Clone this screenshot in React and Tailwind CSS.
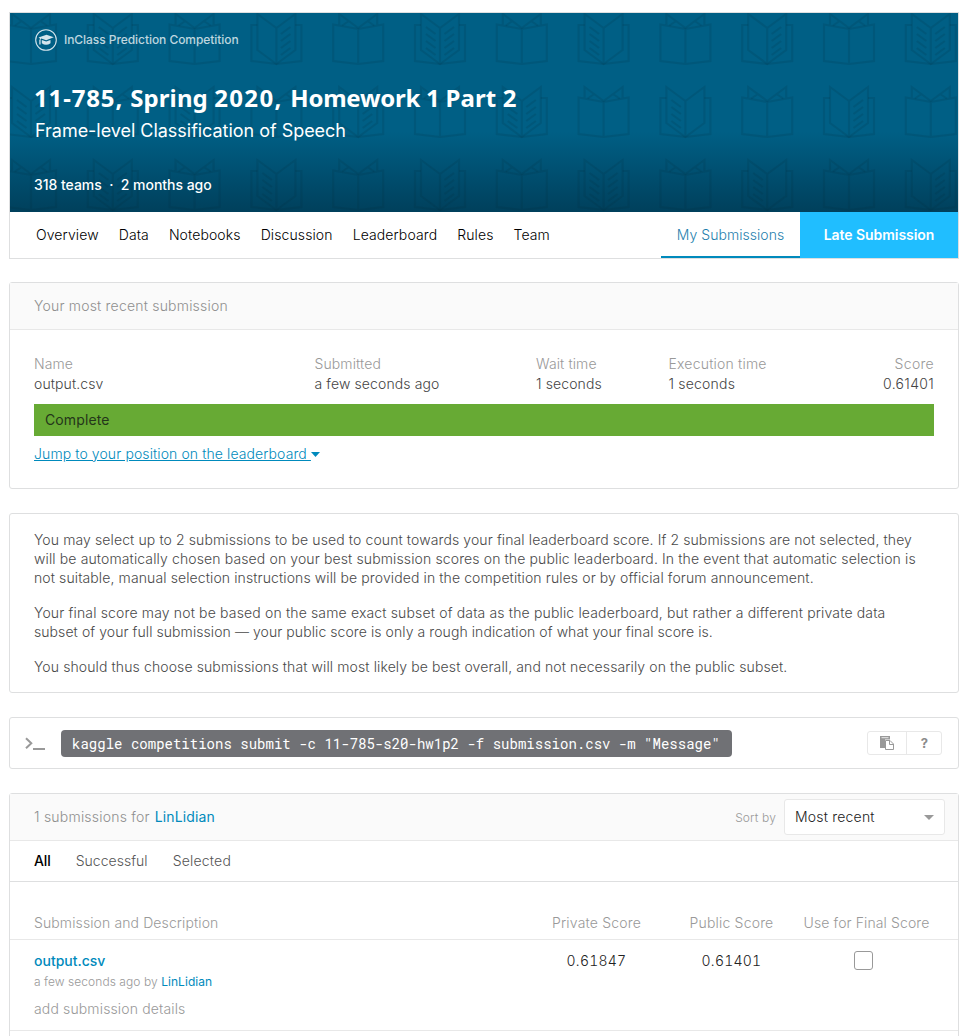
const books = [
  ["plain","both","plain","right","plain","both","plain","left","plain","right","plain","both"],
  ["both","plain","left","plain","right","plain","both","plain","left","plain","right","plain"],
  ["plain","both","plain","left","plain","right","plain","both","plain","left","plain","right"],
];

function Book({ kind, x, y }) {
  const lines = (s) => [14, 21, 28, 35].map((v) => <path key={v} d={s < 0 ? `M-4.5 ${v + 7}L-14 ${v}` : `M4.5 ${v + 7}L14 ${v}`} />);
  return (
    <g transform={`translate(${x} ${y})`}>
      {kind === "plain" ? (
        <>
          <path d="M-25 11.5L0 16L25 11.5V48L0 51L-25 48ZM0 16V51" />
          <path d="M-19 11.5V1L0 15L19 1V11.5M-16 12.5L-10 8.5M16 12.5L10 8.5" />
        </>
      ) : (
        <>
          <path d="M0 15L-19 1V37L0 51L19 37V1ZM0 15V51" />
          <path d="M-19 12H-25V48L0 51L25 48V12H19" />
          {kind !== "right" && lines(-1)}
          {kind !== "left" && lines(1)}
        </>
      )}
    </g>
  );
}

function Hero() {
  return (
    <div className="relative h-[199px] overflow-hidden bg-[#005f85]">
      <div className="absolute inset-x-0 bottom-0 h-[80px] bg-gradient-to-b from-transparent to-[#00405c]" />
      <svg className="absolute inset-0" width="948" height="199" fill="none" stroke="#00283c" strokeOpacity=".14" strokeWidth="2.1">
        {books.map((row, r) => row.map((kind, c) => <Book key={`${r}-${c}`} kind={kind} x={21 + c * 81.8} y={r * 73} />))}
      </svg>
      <div className="relative px-[25px] pt-[15px] text-white">
        <div className="flex h-[23px] items-center gap-[7px] text-[12px] font-medium tracking-[-0.06px] text-white/75">
          <svg width="22" height="22" viewBox="0 0 22 22">
            <circle cx="11" cy="11" r="10.3" fill="none" stroke="#d5e5ec" strokeWidth="1.1" />
            <path fill="#d5e5ec" d="M3.5 8.6L11.5 5.8L18.8 8.3L11.2 11.2L6.3 9.5L5.6 10.2V15.5H4.3V10.8H4.8V9.2ZM6.8 10.9L11.2 12.5L15.5 10.9V14.2Q11 17.2 6.8 14.2Z" />
          </svg>
          <span className="whitespace-nowrap">InClass Prediction Competition</span>
        </div>
        <h1 className="-ml-px mt-[30px] h-[34px] whitespace-nowrap font-['Noto_Sans'] text-[24px] leading-[34px] font-bold">
          <span className="tracking-[0.85px]">11-785, </span>
          <span className="tracking-[0.1px]">Spring </span>
          <span className="tracking-[1.35px]">2020, </span>
          <span className="tracking-[-0.25px]">Homework 1 </span>
          <span className="tracking-[0.1px]">Part 2</span>
        </h1>
        <h2 className="mt-[4px] text-[18px] leading-[24px] font-normal tracking-[-0.03px]">Frame-level Classification of Speech</h2>
        <p className="-ml-px mt-[32px] text-[14px] leading-5 font-medium tracking-[-0.03px]">318 teams&nbsp; · &nbsp;2 months ago</p>
      </div>
    </div>
  );
}

function Field({ label, value, className }) {
  return (
    <div className={className}>
      <div className="text-[#999]">{label}</div>
      <div className="text-[#444]">{value}</div>
    </div>
  );
}

const card = "rounded-[3px] border border-[#dedfe0] bg-white";

export default function App() {
  return (
    <div className="h-[1036px] overflow-hidden bg-white pt-3 pl-[9px] font-['Inter',sans-serif] text-[14px] font-light tracking-[0.11px]">
      <div className="w-[950px]">
        <header className="h-[247px] border border-[#dedfe0]">
          <Hero />
          <nav className="flex h-[46px] items-stretch">
            <div className="flex flex-1 items-center gap-[20px] pb-[1px] pl-[26px] text-black">
              {["Overview", "Data", "Notebooks", "Discussion", "Leaderboard", "Rules", "Team"].map((t) => <a key={t}>{t}</a>)}
            </div>
            <a className="flex w-[139px] items-center justify-center border-b-2 border-[#008abc] tracking-[0.05px] text-[#1f7fae]">My Submissions</a>
            <a className="flex w-[158px] items-center justify-center bg-[#20beff] pb-[1px] font-semibold tracking-[-0.05px] text-white">Late Submission</a>
          </nav>
        </header>

        <section className={`${card} mt-[23px] h-[207px]`}>
          <div className="flex h-[47px] items-center border-b border-[#e8e8e8] bg-[#fafafa] pb-[1px] pl-6 tracking-[0.2px] text-[#8f8f8f]">Your most recent submission</div>
          <div className="px-6 pt-6">
            <div className="flex leading-5">
              <Field className="w-[280.5px]" label="Name" value="output.csv" />
              <Field className="w-[221.5px]" label="Submitted" value="a few seconds ago" />
              <Field className="w-[132.5px]" label="Wait time" value="1 seconds" />
              <Field className="w-[133px] tracking-[0.2px]" label="Execution time" value="1 seconds" />
              <Field className="flex-1 text-right tracking-[0.3px]" label="Score" value="0.61401" />
            </div>
            <div className="mt-[10px] flex h-8 items-center bg-[#67aa34] pb-[1px] pl-[11px] font-normal text-[#24351a]">Complete</div>
            <a className="mt-2 flex items-center leading-5 tracking-[0.1px] text-[#008abc]">
              <span className="whitespace-pre underline">Jump to your position on the leaderboard </span>
              <svg width="9" height="5" viewBox="0 0 9 5"><path fill="#008abc" d="M0 0H9L4.5 5Z" /></svg>
            </a>
          </div>
        </section>

        <section className={`${card} mt-6 h-[180px] px-6 pt-[16px] leading-[19px] whitespace-nowrap text-[#494949]`}>
          <p className="tracking-[0.11px]">You may select up to 2 submissions to be used to count towards your final leaderboard score. If 2 submissions are not selected, they<br /><span className="tracking-[0.125px]">will be automatically chosen based on your best submission scores on the public leaderboard. In the event that automatic selection is</span><br />not suitable, manual selection instructions will be provided in the competition rules or by official forum announcement.</p>
          <p className="mt-4"><span className="tracking-[0.155px]">Your final score may not be based on the same exact subset of data as the public leaderboard, but rather a different private data</span><br /><span className="tracking-[0.075px]">subset of your full submission — your public score is only a rough indication of what your final score is.</span></p>
          <p className="mt-4">You should thus choose submissions that will most likely be best overall, and not necessarily on the public subset.</p>
        </section>

        <section className={`${card} mt-6 flex h-[52px] items-center pr-4 pl-[15px] tracking-normal`}>
          <svg className="mt-px" width="20" height="14" viewBox="0 0 20 14" fill="none" stroke="#999" strokeWidth="2"><path d="M1 1.3L6.3 6.3L1 11.3M8 12H20" /></svg>
          <code className="ml-4 flex h-[27px] w-[671px] items-center rounded-[4px] bg-[#707175] pl-[11px] font-['Roboto_Mono','DejaVu_Sans_Mono',monospace] text-[14px] font-normal tracking-[0.012px] whitespace-nowrap text-white">kaggle competitions submit -c 11-785-s20-hw1p2 -f submission.csv -m "Message"</code>
          <div className="ml-auto flex h-6 w-[75px] rounded-[3px] border border-[#e8e8e8]">
            <div className="flex w-[39px] items-center justify-center border-r border-[#e8e8e8]">
              <svg width="14" height="14" viewBox="0 0 14 14"><path fill="#999" d="M0 0H10V3.5H5V12H0Z" /><path stroke="#fff" strokeWidth=".8" d="M1.5 1.7H8.5" /><path fill="#fff" stroke="#999" d="M5.5 4.5H10L13.5 8V13.5H5.5ZM9.5 4.5V8.5H13.5" /></svg>
            </div>
            <div className="flex flex-1 items-center justify-center pt-[1px] pl-[1px] text-[13px] font-bold text-[#8b8b8b]">?</div>
          </div>
        </section>

        <section className={`${card} mt-6 h-[260px]`}>
          <div className="flex h-[47px] items-center border-b border-[#e8e8e8] bg-[#fafafa] pr-[13px] pl-6 text-[#8f8f8f]">
            <span className="pb-[1px] tracking-[0.22px]">1 submissions for</span><a className="ml-[5px] pb-[1px] font-normal text-[#008abc]">LinLidian</a>
            <span className="mr-2 ml-auto pt-[1px] text-[12px] tracking-[0.15px] text-[#999]">Sort by</span>
            <div className="flex h-9 w-[161px] items-center justify-between rounded-[3px] border border-[#e8e8e8] bg-white pr-[10px] pl-[10px] tracking-[0.2px] text-[#222]"><span className="pb-[1px]">Most recent</span>
              <svg width="10" height="5" viewBox="0 0 10 5"><path fill="#999" d="M0 0H10L5 5Z" /></svg>
            </div>
          </div>
          <div className="flex h-[41px] items-center gap-[25px] border-b border-[#dedfe0] pb-[1px] pl-6 text-[#555]">
            <a className="font-medium tracking-[-0.1px] text-black">All</a><a className="tracking-[0.03px]">Successful</a><a className="tracking-[0.2px]">Selected</a>
          </div>
          <div className="flex h-[58px] items-end border-b border-[#e8e8e8] pb-[6px] pl-6 leading-5 text-[#999]">
            <span className="w-[495px]">Submission and Description</span>
            <span className="w-[135px] text-center tracking-[0.18px]">Private Score</span>
            <span className="w-[135px] text-center tracking-[0.18px]">Public Score</span>
            <span className="w-[135px] text-center whitespace-nowrap">Use for Final Score</span>
          </div>
          <div className="flex h-[91px] border-b border-[#e8e8e8] pt-[11px] pl-6 leading-5">
            <div className="w-[495px]">
              <a className="block font-medium tracking-normal text-[#008abc]">output.csv</a>
              <div className="mt-[1px] text-[12px] tracking-[0.06px] text-[#999]">a few seconds ago by <a className="font-normal text-[#008abc]">LinLidian</a></div>
              <div className="mt-[7px] tracking-[0.14px] text-[#999]">add submission details</div>
            </div>
            <span className="w-[135px] text-center tracking-[0.25px] text-[#222] tabular-nums">0.61847</span>
            <span className="w-[135px] text-center tracking-[0.25px] text-[#222] tabular-nums">0.61401</span>
            <span className="flex w-[129px] justify-center"><i className="block size-[19px] rounded-[3px] border-[1.5px] border-[#999]" /></span>
          </div>
        </section>
      </div>
    </div>
  );
}
